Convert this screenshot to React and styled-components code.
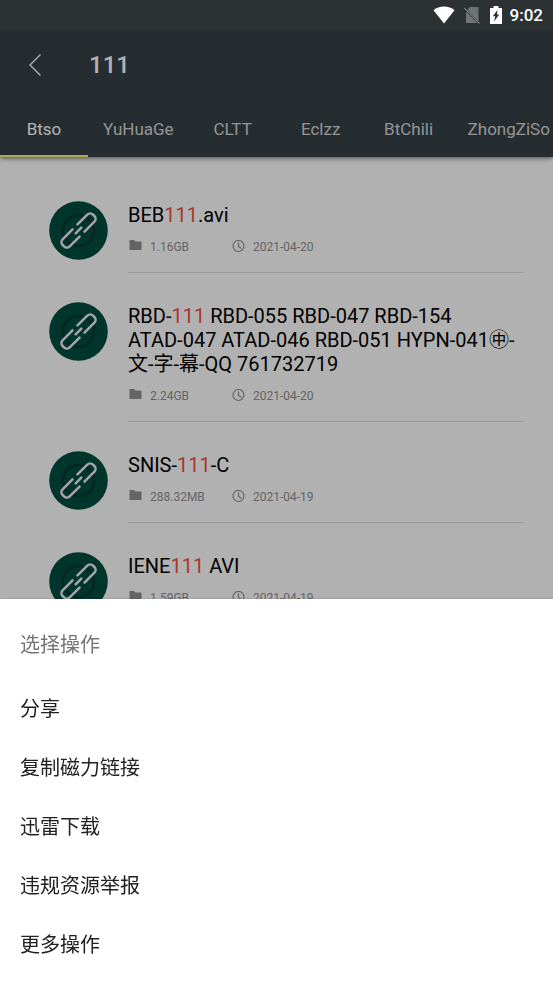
import React, { useState } from "react";
import styled, { createGlobalStyle } from "styled-components";

const GlobalStyle = createGlobalStyle`
  * {
    box-sizing: border-box;
  }

  body {
    margin: 0;
    font-family: Roboto, "Noto Sans CJK SC", sans-serif;
  }

  button {
    border: 0;
    background: none;
    font-family: inherit;
    cursor: pointer;
  }
`;

const Page = styled.div`
  height: 100vh;
  overflow: hidden;
  background-color: #fefefe;
`;

const StatusBar = styled.div`
  position: relative;
  z-index: 3;
  display: flex;
  justify-content: flex-end;
  align-items: center;
  height: 30px;
  padding: 0 10px;
  background-color: #2c3134;
  color: #fff;
`;

const StatusIcons = styled.div`
  display: flex;
  align-items: center;
  gap: 8px;
  margin-right: 7px;
`;

const Clock = styled.span`
  font-size: 17px;
  font-weight: 500;
`;

const Header = styled.header`
  position: relative;
  background-color: #374145;
  box-shadow: 0 1px 5px rgba(0, 0, 0, 0.6);
`;

const TopBar = styled.div`
  display: flex;
  align-items: center;
  gap: 40px;
  height: 70px;
  padding: 0 22px;
`;

const BackButton = styled.button`
  display: flex;
  padding: 0;
`;

const Title = styled.h1`
  margin: 0;
  color: #fff;
  font-size: 24px;
  font-weight: 500;
`;

const Tabs = styled.nav`
  display: flex;
  overflow: hidden;
`;

const Tab = styled.button`
  flex: none;
  min-width: 88px;
  height: 57px;
  padding: 0 15px;
  color: ${(props) => (props.$active ? "#fff" : "#d6d6d6")};
  font-size: 17px;
  box-shadow: ${(props) => (props.$active ? "inset 0 -2px #fff176" : "none")};
`;

const List = styled.ul`
  margin: 0;
  padding: 15px 29px 0 49px;
  list-style: none;
`;

const Item = styled.li`
  display: flex;
  gap: 20px;
  padding-top: 29px;
`;

const Content = styled.div`
  flex: 1;
  padding: 2px 0 18px;
  border-bottom: 1px solid #e0e0e0;
`;

const Name = styled.h2`
  margin: 0 0 13px;
  color: #000;
  font-size: 20px;
  font-weight: 400;
  line-height: 24px;
  white-space: pre-line;
`;

const Keyword = styled.span`
  color: #f44e44;
`;

const Meta = styled.div`
  display: flex;
  color: #909090;
  font-size: 12px;
  line-height: 14px;
`;

const MetaItem = styled.span`
  display: flex;
  gap: 7px;
  min-width: 103px;
`;

const Scrim = styled.div`
  position: fixed;
  inset: 0;
  z-index: 1;
  background-color: rgba(0, 0, 0, 0.3);
`;

const Sheet = styled.section`
  position: fixed;
  right: 0;
  bottom: 0;
  left: 0;
  z-index: 2;
  display: flex;
  flex-direction: column;
  padding: 13px 0 10px;
  background-color: #fff;
  box-shadow: 0 0 2px rgba(0, 0, 0, 0.2);
`;

const SheetTitle = styled.h2`
  margin: 0;
  padding: 0 20px;
  color: #757575;
  font-size: 20px;
  font-weight: 400;
  line-height: 66px;
`;

const SheetButton = styled.button`
  height: 59px;
  padding: 0 20px;
  color: #212121;
  font-size: 20px;
  text-align: left;
`;

const WifiIcon = () => (
  <svg width="22" height="18" viewBox="0 0 22 18">
    <path d="M11 17.5 0.5 4.2C3.4 1.8 7 0.5 11 0.5s7.600 1.300 10.500 3.700z" fill="#fff" />
  </svg>
);

const NoSimIcon = () => (
  <svg width="18" height="18" viewBox="0 0 18 18">
    <path d="M7 1h7.500q1 0 1 1v13.500L4.500 4z" fill="#6f7375" />
    <path d="M3 5.500 14.500 17H4q-1 0-1-1z" fill="#6f7375" />
    <path d="M1.500 2 16.500 17.500" stroke="#6f7375" strokeWidth="1.300" />
  </svg>
);

const BatteryIcon = () => (
  <svg width="14" height="18" viewBox="0 0 14 18">
    <path d="M4.500 0h5v2H13v16H1V2h3.500z" fill="#fff" />
    <path d="M8.500 4 3.800 10.200h2.500L5 15.500l5.300-7H8z" fill="#2c3134" />
  </svg>
);

const BackIcon = () => (
  <svg width="27" height="28" viewBox="0 0 27 28">
    <path d="M18.500 3.500 8 14l10.500 10.500" fill="none" stroke="#fff" strokeWidth="1.400" />
  </svg>
);

const LinkIcon = () => (
  <svg width="59" height="59" viewBox="0 0 59 59">
    <circle cx="29.500" cy="29.500" r="29.300" fill="#004d40" />
    <circle cx="29.500" cy="29.500" r="15.500" fill="none" stroke="#00382e" strokeWidth="2.600" />
    <g
      transform="rotate(-45 29.500 29.500)"
      fill="none"
      stroke="#f0eaf4"
      strokeWidth="2.500"
      strokeLinecap="round"
    >
      <path d="M26 24.500H12a4 4 0 0 0-4 4v2a4 4 0 0 0 4 4H26" />
      <path d="M33 24.500h14a4 4 0 0 1 4 4v2a4 4 0 0 1-4 4H33" />
      <path d="M25.500 29.500h8" />
    </g>
  </svg>
);

const FolderIcon = () => (
  <svg width="15" height="12" viewBox="0 0 15 12">
    <path d="M1.500 0h4.500l1.500 1.500h5q1 0 1 1v7.500h-12z" fill="#909090" />
  </svg>
);

const TimeIcon = () => (
  <svg width="15" height="14" viewBox="0 0 15 14">
    <g fill="none" stroke="#909090" strokeWidth="1.200">
      <circle cx="7.500" cy="6" r="5.500" />
      <path d="M7.500 2.500V6.500l3 2" />
    </g>
  </svg>
);

const tabs = ["Btso", "YuHuaGe", "CLTT", "Eclzz", "BtChili", "ZhongZiSo"];

const results = [
  { name: "BEB111.avi", size: "1.16GB", date: "2021-04-20" },
  {
    name: "RBD-111 RBD-055 RBD-047 RBD-154\nATAD-047 ATAD-046 RBD-051 HYPN-041㊥-\n文-字-幕-QQ 761732719",
    size: "2.24GB",
    date: "2021-04-20",
  },
  { name: "SNIS-111-C", size: "288.32MB", date: "2021-04-19" },
  { name: "IENE111 AVI", size: "1.59GB", date: "2021-04-19" },
];

const actions = ["分享", "复制磁力链接", "迅雷下载", "违规资源举报", "更多操作"];

const keyword = "111";

const Result = ({ name, size, date }) => {
  const [before, after] = name.split(keyword);

  return (
    <Item>
      <LinkIcon />
      <Content>
        <Name>
          {before}
          <Keyword>{keyword}</Keyword>
          {after}
        </Name>
        <Meta>
          <MetaItem>
            <FolderIcon />
            {size}
          </MetaItem>
          <MetaItem>
            <TimeIcon />
            {date}
          </MetaItem>
        </Meta>
      </Content>
    </Item>
  );
};

const App = () => {
  const [activeTab, setActiveTab] = useState("Btso");
  const [isOpen, setIsOpen] = useState(true);

  const closeSheet = () => {
    setIsOpen(false);
  };

  return (
    <Page>
      <GlobalStyle />
      <StatusBar>
        <StatusIcons>
          <WifiIcon />
          <NoSimIcon />
          <BatteryIcon />
        </StatusIcons>
        <Clock>9:02</Clock>
      </StatusBar>
      <Header>
        <TopBar>
          <BackButton aria-label="Back">
            <BackIcon />
          </BackButton>
          <Title>{keyword}</Title>
        </TopBar>
        <Tabs>
          {tabs.map((tab) => (
            <Tab key={tab} $active={tab === activeTab} onClick={() => setActiveTab(tab)}>
              {tab}
            </Tab>
          ))}
        </Tabs>
      </Header>
      <List>
        {results.map((result) => (
          <Result key={result.name} {...result} />
        ))}
      </List>
      {isOpen && (
        <>
          <Scrim onClick={closeSheet} />
          <Sheet>
            <SheetTitle>选择操作</SheetTitle>
            {actions.map((action) => (
              <SheetButton key={action} onClick={closeSheet}>
                {action}
              </SheetButton>
            ))}
          </Sheet>
        </>
      )}
    </Page>
  );
};

export default App;
